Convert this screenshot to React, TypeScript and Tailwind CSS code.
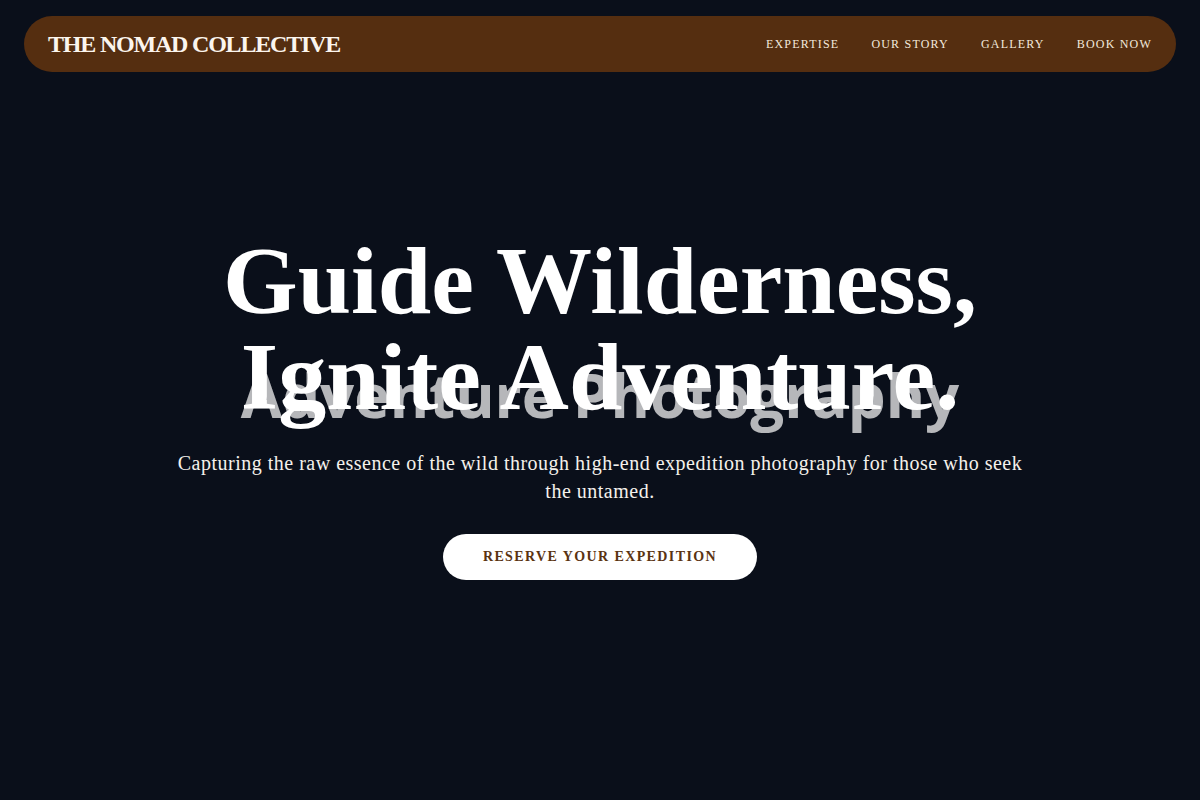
import { useState } from "react";

const links = ["Expertise", "Our Story", "Gallery", "Book Now"];

export default function App() {
  const [active, setActive] = useState<string | null>(null);

  return (
    <div className="relative min-h-screen bg-[#0a0f1a] font-['Liberation_Serif',serif] text-white">
      {/* Nav */}
      <header className="absolute inset-x-6 top-4 z-20">
        <nav className="flex h-14 items-center justify-between rounded-full bg-[#552e10] px-6">
          <a href="#" className="text-2xl font-bold tracking-tighter text-[#fbf5ee]">
            THE NOMAD COLLECTIVE
          </a>
          <ul className="flex items-center gap-8 pb-0.5">
            {links.map((l) => (
              <li key={l}>
                <a
                  href="#"
                  onClick={() => setActive(l)}
                  className={`text-xs uppercase tracking-widest text-[#f3e9dc] ${
                    active === l ? "underline" : ""
                  }`}
                >
                  {l}
                </a>
              </li>
            ))}
          </ul>
        </nav>
      </header>

      {/* Hero */}
      <main className="flex min-h-screen flex-col items-center justify-center px-6 pt-3 text-center">
        <div className="relative">
          <span className="pointer-events-none absolute inset-x-0 bottom-0 whitespace-nowrap font-['Open_Sans',sans-serif] text-6xl leading-none font-bold text-white/70">
            Adventure Photography
          </span>
          <h1 className="relative text-8xl leading-none font-bold text-white">
            Guide Wilderness,
            <br />
            Ignite Adventure.
          </h1>
        </div>
        <p className="mt-6 max-w-[860px] text-xl leading-7 tracking-wide text-[#f4f1ec]">
          Capturing the raw essence of the wild through high-end expedition photography for those
          who seek the untamed.
        </p>
        <button className="mt-[29px] rounded-full bg-white px-10 py-[13px] text-sm font-bold tracking-widest text-[#5a3311] uppercase">
          Reserve Your Expedition
        </button>
      </main>
    </div>
  );
}
